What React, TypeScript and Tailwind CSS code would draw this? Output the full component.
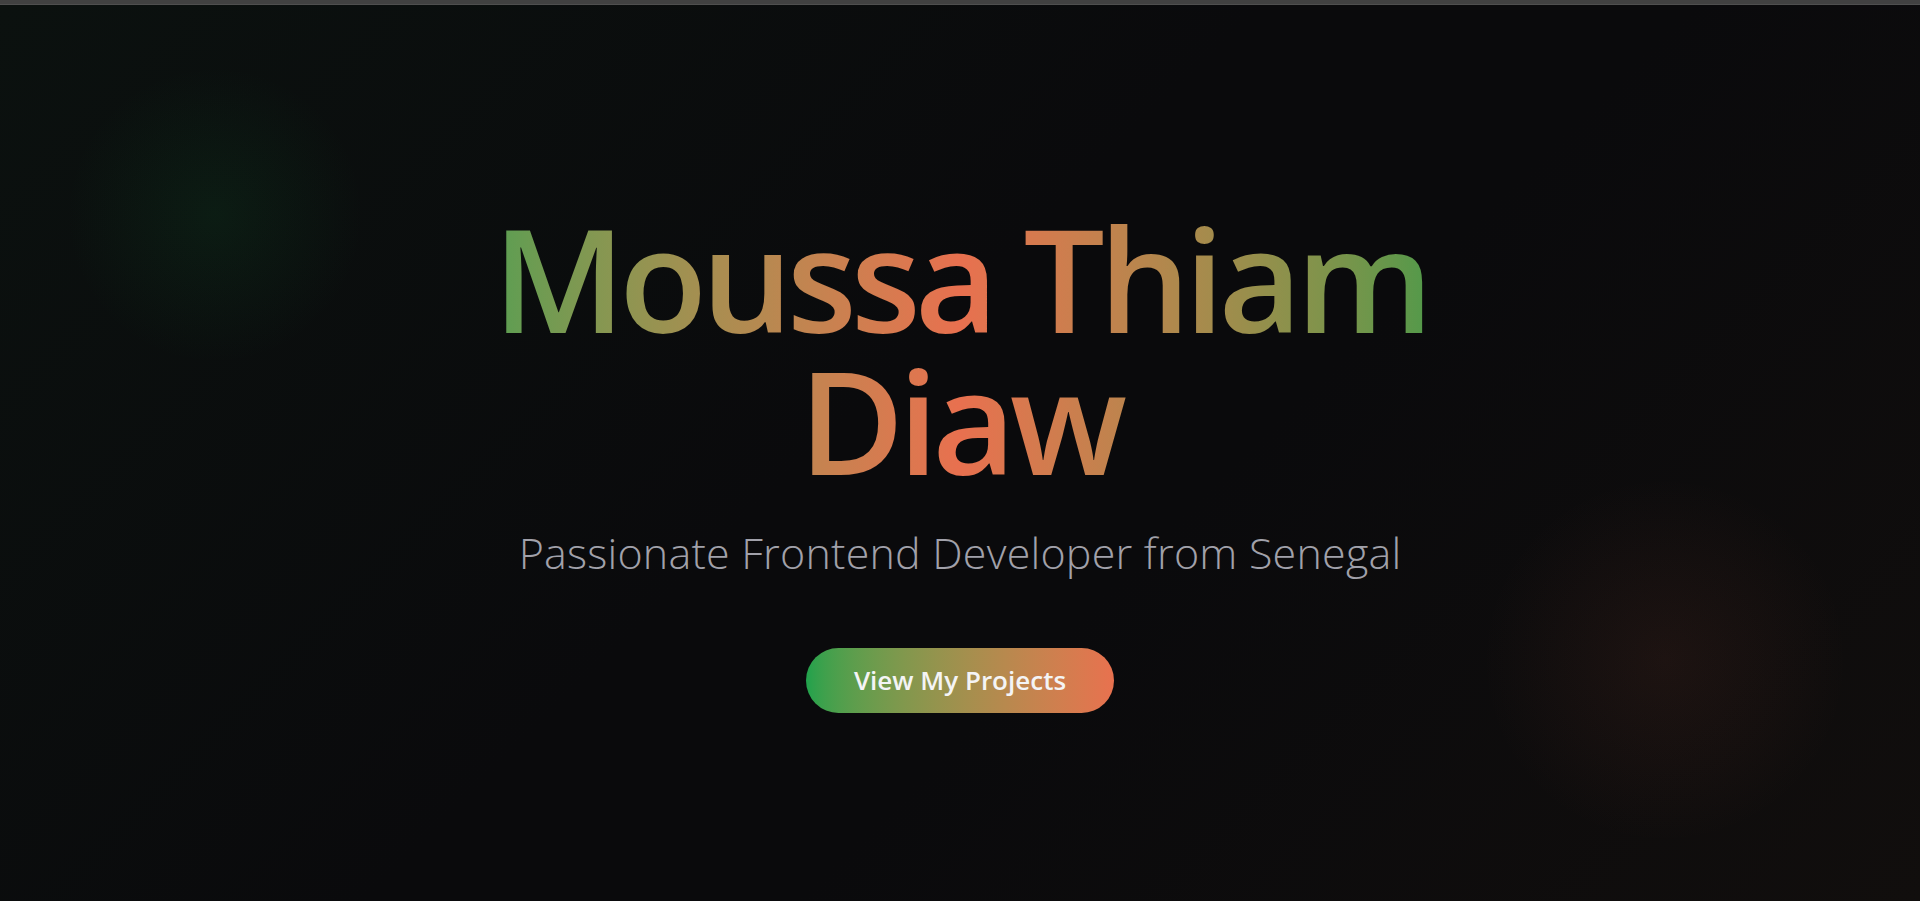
import React from "react";

export default function App() {
  return (
    <div className="min-h-[901px] w-full flex flex-col bg-[#0a0a0c] font-['Open_Sans',sans-serif]">
      <div className="h-[5px] w-full bg-[#414141] border-b border-[#4f4f4f]" />
      <section className="relative flex-1 overflow-hidden bg-[linear-gradient(135deg,#0b110f_0%,#0a0a0c_45%,#0a0a0c_60%,#110e0d_100%)]">
        <div className="pointer-events-none absolute left-[65px] top-[60px] h-[300px] w-[300px] rounded-full bg-[radial-gradient(circle,rgba(22,163,74,0.09)_0%,rgba(22,163,74,0.04)_40%,rgba(22,163,74,0)_70%)]" />
        <div className="pointer-events-none absolute left-[1480px] top-[470px] h-[370px] w-[370px] rounded-full bg-[radial-gradient(circle,rgba(231,111,81,0.07)_0%,rgba(231,111,81,0.03)_40%,rgba(231,111,81,0)_70%)]" />
        <div className="relative flex h-[896px] flex-col items-center pt-[201px]">
          <h1 className="w-fit text-center text-[144px] font-semibold leading-[142px] tracking-[-0.042em] bg-gradient-to-r from-[#5a9e52] via-[#e8704f] to-[#53994a] bg-clip-text text-transparent">
            Moussa Thiam
            <br />
            Diaw
          </h1>
          <p className="mt-[33px] text-[43px] font-light leading-[60px] tracking-[0.005em] text-[#a1a1aa]">
            Passionate Frontend Developer from Senegal
          </p>
          <button className="mt-[65px] inline-flex h-[65px] items-center rounded-full bg-gradient-to-r from-[#1fa24c] to-[#e8714f] px-12 text-[26px] font-semibold text-[#f4f4f5]">
            View My Projects
          </button>
        </div>
      </section>
    </div>
  );
}
